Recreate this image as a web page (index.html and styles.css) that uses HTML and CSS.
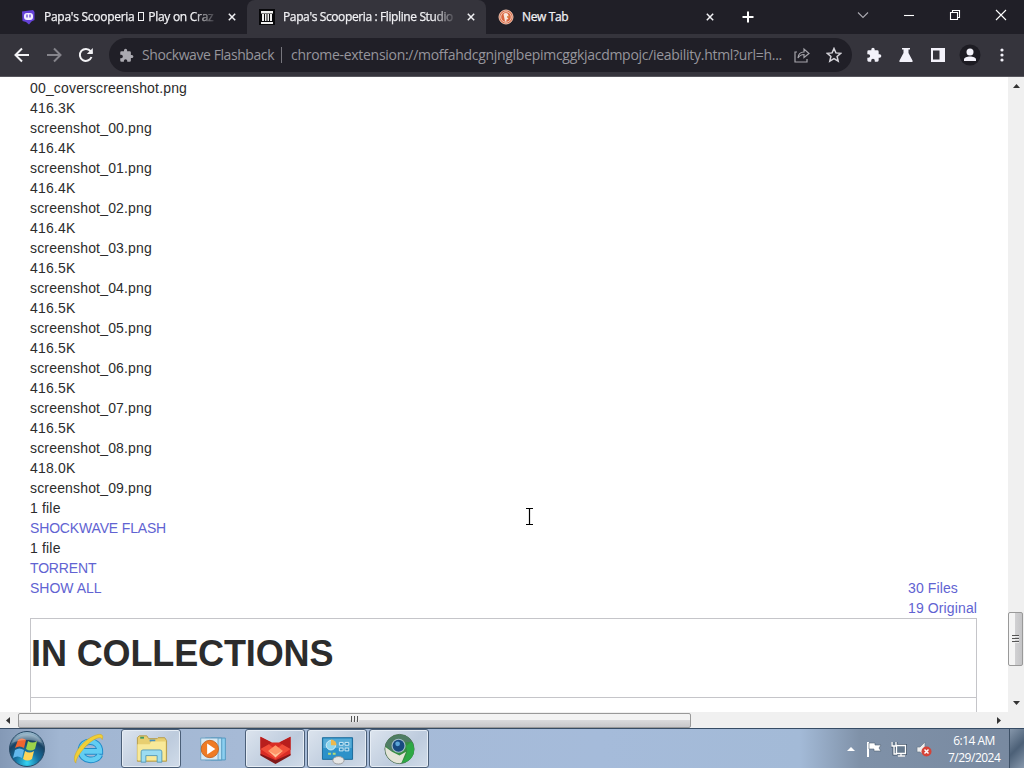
FILE: index.html
```html
<!DOCTYPE html>
<html lang="en">
<head>
    <meta charset="utf-8">
    <title>Papa's Scooperia : Flipline Studios</title>
    <link rel="stylesheet" href="styles.css">
</head>
<body>
    <div class="tabs">
        <div class="tab first">
            <svg class="favicon" viewBox="0 0 16 16"><path d="M2 2.500L13 1l1.500 2v8l-3 1.500-2.500 3-3-2.500-3.500-1z" fill="#6542d8"/><rect x="4" y="4" width="9" height="7" rx="3" fill="#f2eeff"/><path d="M7 5.500v3M10 5.500v3" stroke="#6542d8" stroke-width="1.3"/></svg>
            <span class="tab-title">Papa's Scooperia <i class="tofu"></i> Play on Craz</span>
            <svg class="close" viewBox="0 0 8 8"><path d="M.8.8l6.4 6.4M7.2.8L.8 7.2"/></svg>
        </div>
        <div class="tab active">
            <svg class="favicon" viewBox="0 0 16 16"><path d="M0 0h16v16H0z" fill="#08080b"/><path d="M2 2h12v2.500H2zM2 13h12v2H2zM3 5h2v7H3zM6 5h1.500v7H6zM8.500 5H10v7H8.500zM11 5h2v7h-2z" fill="#eee"/></svg>
            <span class="tab-title">Papa's Scooperia : Flipline Studio</span>
            <svg class="close" viewBox="0 0 8 8"><path d="M.8.8l6.4 6.4M7.2.8L.8 7.2"/></svg>
        </div>
        <div class="tab last">
            <svg class="favicon" viewBox="0 0 16 16"><circle cx="8" cy="8" r="7" fill="#d9643f" stroke="#f3c8b4"/><circle cx="8" cy="8" r="5.300" fill="none" stroke="#f5d9cb" stroke-width=".9"/><path d="M5.500 5c1-1.500 3.500-1.500 4.500 0l.5 2-1.500 1 1.500 2-2 .500v2H7z" fill="#f9e5da"/><path d="M9 7.500l2.500.5" stroke="#d39449"/></svg>
            <span class="tab-title plain-title">New Tab</span>
            <svg class="close" viewBox="0 0 8 8"><path d="M.8.8l6.4 6.4M7.2.8L.8 7.2"/></svg>
        </div>
        <svg class="new-tab" viewBox="0 0 12 12"><path d="M6 .5v11M.5 6h11"/></svg>
        <div class="window-buttons">
            <svg viewBox="0 0 12 12"><path d="M1 3.500l5 5 5-5" stroke="#aaa9b0"/></svg>
            <svg viewBox="0 0 12 12"><path d="M1 6.500h10"/></svg>
            <svg viewBox="0 0 12 12"><path d="M1.500 3.500h7v7h-7zM3.500 3.500v-2h7v7h-2"/></svg>
            <svg viewBox="0 0 12 12"><path d="M1 1l10 10M11 1L1 11"/></svg>
        </div>
    </div>

    <div class="toolbar">
        <div class="nav">
            <svg viewBox="0 0 16 16"><path d="M15 8H2M8 1.500L1.500 8 8 14.500"/></svg>
            <svg class="disabled" viewBox="0 0 16 16"><path d="M1 8h13M8 1.500L14.500 8 8 14.500"/></svg>
            <svg viewBox="0 0 16 16"><path d="M13.500 10A6 6 0 1 1 12.600 4.200L14 6"/><path d="M14.800 1v6h-6z" fill="#f2f2f5" stroke="none"/></svg>
        </div>
        <div class="omnibox">
            <svg class="puzzle" viewBox="0 0 24 24"><path d="M20.500 11H19V7a2 2 0 0 0-2-2h-4V3.500a2.500 2.500 0 0 0-5 0V5H4a2 2 0 0 0-2 2v3.800h1.500a2.700 2.700 0 0 1 0 5.400H2V20a2 2 0 0 0 2 2h3.800v-1.500a2.700 2.700 0 0 1 5.400 0V22H17a2 2 0 0 0 2-2v-4h1.500a2.500 2.500 0 0 0 0-5z"/></svg>
            <span class="ext-name">Shockwave Flashback</span>
            <span class="url">chrome-extension://moffahdcgnjnglbepimcggkjacdmpojc/ieability.html?url=h...</span>
            <svg class="share" viewBox="0 0 16 16"><path d="M3 5H1v10h12v-3M4 11c.3-4 2.500-6 6-6V2l5 4.500-5 4V7.500C7.500 7.500 5.500 8.500 4 11z"/></svg>
            <svg class="star" viewBox="0 0 16 16"><path d="M8 1.500l1.900 4.400 4.800.4-3.600 3.200 1.100 4.700L8 11.700l-4.200 2.500 1.100-4.700L1.300 6.300l4.800-.4z"/></svg>
        </div>
        <div class="actions">
            <svg viewBox="0 0 24 24"><path d="M20.500 11H19V7a2 2 0 0 0-2-2h-4V3.500a2.500 2.500 0 0 0-5 0V5H4a2 2 0 0 0-2 2v3.800h1.500a2.700 2.700 0 0 1 0 5.400H2V20a2 2 0 0 0 2 2h3.800v-1.500a2.700 2.700 0 0 1 5.400 0V22H17a2 2 0 0 0 2-2v-4h1.500a2.500 2.500 0 0 0 0-5z"/></svg>
            <svg viewBox="0 0 16 16"><path d="M4 1h8v1.500h-1.500V6l4 7.500c.5 1-.1 1.500-1 1.500h-11c-.9 0-1.500-.5-1-1.500l4-7.500V2.500H4z"/></svg>
            <svg viewBox="0 0 16 16"><path d="M1 1h14v14H1zM3 3.500v9h6.500v-9z" fill-rule="evenodd"/></svg>
            <svg class="profile" viewBox="0 0 22 22"><circle cx="11" cy="11" r="10.500" fill="#1d1c23"/><circle cx="11" cy="8" r="3.500"/><path d="M5 17v-1.500c0-4 12-4 12 0V17z"/></svg>
            <svg viewBox="0 0 16 16"><circle cx="8" cy="3" r="1.600"/><circle cx="8" cy="8" r="1.600"/><circle cx="8" cy="13" r="1.600"/></svg>
        </div>
    </div>

    <div class="viewport">
        <div class="page">
            <div class="files">
                <div>00_coverscreenshot.png</div>
                <div>416.3K</div>
                <div>screenshot_00.png</div>
                <div>416.4K</div>
                <div>screenshot_01.png</div>
                <div>416.4K</div>
                <div>screenshot_02.png</div>
                <div>416.4K</div>
                <div>screenshot_03.png</div>
                <div>416.5K</div>
                <div>screenshot_04.png</div>
                <div>416.5K</div>
                <div>screenshot_05.png</div>
                <div>416.5K</div>
                <div>screenshot_06.png</div>
                <div>416.5K</div>
                <div>screenshot_07.png</div>
                <div>416.5K</div>
                <div>screenshot_08.png</div>
                <div>418.0K</div>
                <div>screenshot_09.png</div>
                <div>1 file</div>
                <div><a class="caps">SHOCKWAVE FLASH</a></div>
                <div>1 file</div>
                <div><a class="caps">TORRENT</a></div>
            </div>
            <div class="summary">
                <a>SHOW ALL</a>
                <div class="totals"><a>30 Files</a><a>19 Original</a></div>
            </div>
            <div class="collections">
                <h1>IN COLLECTIONS</h1>
            </div>
        </div>
        <div class="vscroll">
            <svg class="up" viewBox="0 0 7 4"><path d="M0 4l3.500-4L7 4z"/></svg>
            <div class="vthumb"><i></i><i></i><i></i></div>
            <svg class="down" viewBox="0 0 7 4"><path d="M0 0h7L3.500 4z"/></svg>
        </div>
        <svg class="cursor" viewBox="0 0 9 17"><path d="M1 .5h7M1 16.500h7M4.500 1v15" stroke="#000" stroke-width="1.200"/></svg>
    </div>

    <div class="hscroll">
        <svg class="left" viewBox="0 0 4 7"><path d="M4 0v7L0 3.500z"/></svg>
        <div class="hthumb"><i></i><i></i><i></i></div>
        <svg class="right" viewBox="0 0 4 7"><path d="M0 0v7l4-3.500z"/></svg>
    </div>

    <div class="taskbar">
        <svg class="start" viewBox="0 0 38 38">
            <defs>
                <radialGradient id="orb" cx=".5" cy=".9" r=".85"><stop offset="0" stop-color="#35d5f4"/><stop offset=".4" stop-color="#16709f"/><stop offset=".75" stop-color="#184263"/><stop offset="1" stop-color="#92b4c9"/></radialGradient>
            </defs>
            <circle cx="19" cy="19" r="17.500" fill="url(#orb)" stroke="#294a66"/>
            <path d="M10 10c3-2 5-2 8 0l-2 8c-3-2-6-2-9 0z" fill="#f0652f"/>
            <path d="M20 11c3 2 6 2 9 0l-2 8c-3 2-6 2-9 0z" fill="#9bd34b"/>
            <path d="M7 20c3-2 6-2 9 0l-2 8c-3-2-6-2-9 0z" fill="#62b8ec"/>
            <path d="M17 21c3 2 6 2 9 0l-2 8c-3 2-6 2-9 0z" fill="#ffd557"/>
            <path d="M4 13C9 1 29 1 34 13 25 9 13 9 4 13z" fill="#fff" opacity=".25"/>
        </svg>
        <div class="task plain">
            <svg viewBox="0 0 34 34"><path d="M28.500 23c-3 8-20 8-20-4.500 0-12.500 20-12.500 20 1H11" fill="none" stroke="#208bc9" stroke-width="7"/><path d="M28.500 23c-3 8-20 8-20-4.500 0-12.500 20-12.500 20 1H11" fill="none" stroke="#62cdf2" stroke-width="5"/><path d="M3 32C-3 26 9 7 25 2c5-1.500 8 0 6 5-1-4-7-1.500-13 3C9 18 3 27 3 32z" fill="#f1cf37" stroke="#c9a82c" stroke-width=".6"/></svg>
        </div>
        <div class="task open">
            <svg viewBox="0 0 34 34"><path d="M2 5l2-2h8l2 3h9l1-1h7l2 3v22H2z" fill="#e8cf70" stroke="#b59b48"/><path d="M5 4h4v2H5z" fill="#3e9963"/><path d="M15 7h6v2h-6z" fill="#4991bd"/><path d="M2 12h13l2-3h15v20H2z" fill="#f8e999"/><path d="M6 31V20q0-2 2-2h18q2 0 2 2v11h-5v-7H11v7z" fill="#9bdcf1" stroke="#559bb9"/></svg>
        </div>
        <div class="task plain media">
            <svg viewBox="0 0 34 34"><path d="M14 5h16v24H14z" fill="#8ccff0" stroke="#4e95be"/><path d="M8 5h18v24H8z" fill="#b8e0f3" stroke="#4e95be"/><path d="M3 5h19v24H3z" fill="#d6e8f3" stroke="#6ba2c2"/><circle cx="13" cy="17" r="9.500" fill="#ef7b24" stroke="#c46421"/><path d="M10 11l9 6-9 6z" fill="#fff"/></svg>
        </div>
        <div class="task open">
            <svg viewBox="0 0 34 34"><path d="M1 4l12 6h8l12-6v19L17 31 1 23z" fill="#d92c25"/><path d="M1 4l12 6-12 8zM33 4l-12 6 12 8z" fill="#b81e1d"/><path d="M1 17l9-5 7 6 7-6 9 5-16 11z" fill="#f04c38"/><path d="M17 13l8 6-8 6-8-6z" fill="#ff9668"/><path d="M10 19l7 4 7-4-7 7z" fill="#ffc49a"/><path d="M1 22l16 7 16-7v2l-16 9L1 24z" fill="#811819"/></svg>
        </div>
        <div class="task open">
            <svg viewBox="0 0 34 34"><path d="M1 5h32v23H1z" fill="#2c91c9" stroke="#176799"/><path d="M2 6h30v10H2z" fill="#56abd6"/><circle cx="10" cy="13" r="5" fill="#8fd6ee" stroke="#d4edf6"/><path d="M10 7a6 6 0 0 1 6 6h-6z" fill="#efb84b"/><path d="M19 10h4v3h-4zM25 10h4v3h-4zM19 16h4v3h-4zM25 16h4v3h-4z" fill="#2b8ac0" stroke="#d5edf6"/><path d="M7 22h3M12 22h3" stroke="#b7db76" stroke-width="2"/><ellipse cx="18" cy="29" rx="6" ry="4" fill="#e6e6e5" stroke="#999"/></svg>
        </div>
        <div class="task open">
            <svg viewBox="0 0 34 34"><circle cx="17" cy="17" r="15.500" fill="#378d43" stroke="#526c58"/><path d="M2 13C5 1 25-2 30 9L17 11l-8 9z" fill="#4f7d64"/><path d="M2 15l7 5 8 4 7-4-5 12C9 33 1 25 2 15z" fill="#e4e4d8"/><path d="M24 14c3 7-1 13-5 18 12-1 17-13 11-23z" fill="#2da845"/><circle cx="16" cy="13.500" r="7.500" fill="#a6bdcb"/><circle cx="16" cy="13.500" r="6.300" fill="#184a80"/><circle cx="15" cy="11.500" r="2.500" fill="#5ca5d7"/></svg>
        </div>
        <div class="tray">
            <svg class="chevron" viewBox="0 0 8 5"><path d="M0 5l4-4 4 4z" fill="#fff"/></svg>
            <svg viewBox="0 0 16 16"><path d="M2 1v15" stroke="#fff" stroke-width="2"/><path d="M3 2h6v2h6l-2 3 2 3H8V8H3z" fill="#fff" stroke="#506173" stroke-width=".6"/></svg>
            <svg viewBox="0 0 16 16"><path d="M5.500 4.500h9v8h-9zM7 15h7M10 13v2M1 1v4h4V1M3 5v8h3" fill="none" stroke="#45566a" stroke-width="3"/><path d="M5.500 4.500h9v8h-9zM7 15h7M10 13v2M1 1v4h4V1M3 5v8h3" fill="#66798d" stroke="#fff" stroke-width="1.300"/></svg>
            <svg viewBox="0 0 16 16"><path d="M1 6h3l5-5v14l-5-4H1z" fill="#eee" stroke="#6b7c8c" stroke-width=".7"/><circle cx="10.500" cy="10.500" r="5" fill="#d64337"/><path d="M8.500 8.500l4 4M12.500 8.500l-4 4" stroke="#fff" stroke-width="1.500"/></svg>
        </div>
        <div class="clock"><div>6:14 AM</div><div>7/29/2024</div></div>
        <div class="show-desktop"></div>
    </div>
</body>
</html>
```
FILE: styles.css
```css
* { box-sizing: border-box; }
body { margin: 0; width: 1024px; height: 768px; overflow: hidden; display: flex; flex-direction: column; background: #fff; font-family: "Open Sans", "Noto Sans", sans-serif; }
svg { display: block; flex: none; }

/* tab strip */
.tabs { height: 34px; flex: none; display: flex; align-items: center; background: #201f27; color: #f1f1f4; }
.tab { height: 34px; display: flex; align-items: center; flex: none; }
.tab.first { width: 247px; padding-left: 20px; }
.tab.active { width: 239px; padding-left: 12px; background: #35343c; border-radius: 8px 8px 0 0; }
.tab.last { width: 254px; padding-left: 12px; }
.favicon { width: 16px; height: 16px; margin-right: 8px; }
.tab-title { width: 172px; white-space: nowrap; font-size: 12px; line-height: 18px; letter-spacing: -.38px; -webkit-text-stroke: .25px; -webkit-mask-image: linear-gradient(90deg, #000 150px, transparent 174px); }
.first .tab-title { letter-spacing: -.27px; }
.plain-title { -webkit-mask-image: none; }
.tofu { display: inline-block; width: 6px; height: 9px; margin: 0 1px; border: 1px solid #f1f1f4; }
.close { width: 8px; height: 8px; margin-left: 12px; fill: none; stroke: #f1f1f4; stroke-width: 1.5; }
.tab.last .close { margin-left: auto; margin-right: 26px; }
.new-tab { width: 12px; height: 12px; margin-left: 2px; fill: none; stroke: #fff; stroke-width: 2; }
.window-buttons { margin-left: auto; margin-right: 17px; display: flex; gap: 34px; padding-bottom: 5px; }
.window-buttons svg { width: 12px; height: 12px; fill: none; stroke: #fff; stroke-width: 1.1; }

/* toolbar */
.toolbar { height: 43px; flex: none; display: flex; align-items: center; background: #35343c; border-bottom: 1px solid #57565d; }
.nav { display: flex; gap: 16px; padding-left: 14px; width: 109px; }
.nav svg { width: 16px; height: 16px; fill: none; stroke: #f2f2f5; stroke-width: 2; }
.nav .disabled { stroke: #85848b; }
.omnibox { width: 743px; height: 34px; border-radius: 17px; background: #201f27; display: flex; align-items: center; padding-left: 10px; color: #96959c; font-size: 14px; line-height: 20px; white-space: nowrap; }
.puzzle { width: 15px; height: 15px; fill: #aaa9b0; }
.ext-name { width: 140px; margin-left: 8px; border-right: 1px solid #77767d; line-height: 16px; letter-spacing: -.42px; }
.url { width: 503px; margin-left: 9px; letter-spacing: -.29px; }
.share, .star { width: 16px; height: 16px; fill: none; stroke: #a5a4ab; stroke-width: 1.2; }
.star { margin-left: 16px; stroke: #d5d4da; stroke-width: 1.5; }
.actions { display: flex; align-items: center; margin-left: 14px; gap: 16px; }
.actions svg { width: 16px; height: 16px; fill: #f3f2fa; }
.actions .profile { width: 22px; height: 22px; margin: 0 -3px; }

/* page */
.viewport { height: 635px; flex: none; display: flex; position: relative; }
.page { width: 1008px; padding: 1px 31px 0 30px; overflow: hidden; font: 14px/20px "Liberation Sans", Arial, sans-serif; color: #2c2c2c; }
.page a { color: #6163d2; }
.files { letter-spacing: .17px; }
.page .caps { letter-spacing: -.16px; }
.summary { display: flex; justify-content: space-between; height: 40px; }
.totals { display: flex; flex-direction: column; width: 69px; white-space: nowrap; letter-spacing: .12px; }
.collections { height: 120px; border: 1px solid #c5c5c9; }
.collections h1 { margin: 0; height: 79px; border-bottom: 1px solid #c5c5c9; font-size: 36px; line-height: 70px; letter-spacing: -.12px; color: #2c2c2c; white-space: nowrap; }
.cursor { position: absolute; left: 525px; top: 431px; width: 9px; height: 17px; }

/* scrollbars */
.vscroll { width: 16px; background: #f0f0f0; display: flex; flex-direction: column; align-items: center; }
.up, .down { width: 7px; height: 4px; fill: #333; margin-top: 7px; }
.vthumb { width: 15px; height: 54px; margin-top: 524px; margin-right: 1px; border: 1px solid #999; border-radius: 2px; background: linear-gradient(90deg, #f4f4f4 45%, #d0d0d2 50%, #c4c4c6); display: flex; flex-direction: column; align-items: center; justify-content: center; gap: 1px; }
.vthumb i { width: 7px; height: 2px; background: #555; border-bottom: 1px solid #eee; }
.down { margin-top: 35px; }
.hscroll { height: 16px; flex: none; background: #f0f0f0; display: flex; align-items: center; }
.left, .right { width: 4px; height: 7px; fill: #333; }
.left { margin-left: 6px; }
.hthumb { width: 673px; height: 15px; margin-left: 8px; border: 1px solid #999; border-radius: 2px; background: linear-gradient(#f3f3f3 45%, #d9d9db 50%, #c7c7ca); display: flex; align-items: center; justify-content: center; gap: 1px; }
.hthumb i { width: 2px; height: 6px; margin-bottom: 2px; background: #555; border-right: 1px solid #eee; }
.right { margin-left: auto; margin-right: 23px; }

/* taskbar */
.taskbar { height: 40px; flex: none; display: flex; align-items: center; border-top: 1px solid #364c65; background: linear-gradient(90deg, #8499b6 0, #a1b6d2 60px, #a6bad6 240px, #a5bbda 600px, #a3bad7 800px, #7f91a8 860px, #7889a0); }
.start { width: 38px; height: 38px; margin-left: 8px; }
.task { width: 60px; height: 39px; margin-right: 2px; display: flex; align-items: center; justify-content: center; flex: none; }
.start + .task { margin-left: 13px; }
.task svg { width: 33px; height: 32px; }
.task.plain svg { width: 32px; height: 32px; }
.task.media svg { width: 31px; }
.open { border: 1px solid #4b5f78; border-radius: 3px; background: linear-gradient(135deg, #dce4ee, #bdcbdd 60%, #d1dce9); box-shadow: inset 0 0 0 1px #e6edf5; }
.tray { margin-left: auto; display: flex; align-items: center; gap: 9px; }
.tray svg { width: 16px; height: 16px; }
.tray .chevron { width: 8px; height: 5px; margin-right: 2px; }
.clock { width: 52px; margin-left: 16px; margin-right: 9px; color: #fff; font-size: 12px; line-height: 17px; letter-spacing: -.5px; text-align: center; white-space: nowrap; }
.show-desktop { width: 15px; height: 39px; border-left: 1px solid #3d5066; background: linear-gradient(135deg, #8596aa, #4c6077 50%, #8798ac); }
```
